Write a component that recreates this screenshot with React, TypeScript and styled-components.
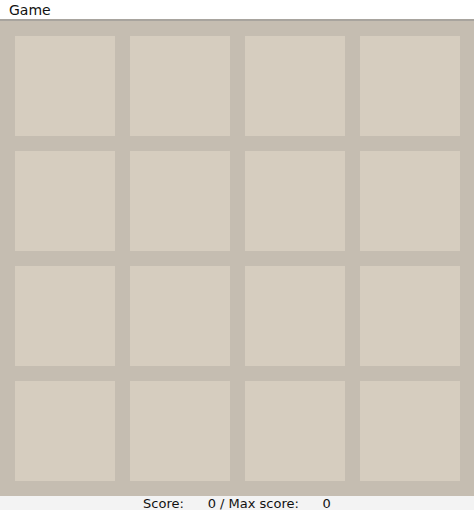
import styled, { createGlobalStyle } from "styled-components";

const GlobalStyle = createGlobalStyle`
  html, body {
    margin: 0;
    padding: 0;
    background: #f2f2f2;
  }
  body {
    font-family: "DejaVu Sans", "Open Sans", sans-serif;
  }
`;

const Window = styled.div`
  width: 474px;
  height: 510px;
  display: flex;
  flex-direction: column;
  overflow: hidden;
`;

const TitleBar = styled.div`
  height: 19px;
  flex: none;
  background: #ffffff;
  border-bottom: 2px solid #a8a49e;
  display: flex;
  align-items: center;
  padding-left: 9px;
  font-size: 14px;
  color: #111;
`;

const Board = styled.div`
  flex: none;
  background: #c5bdb1;
  padding: 15px 14px 15px 15px;
  display: grid;
  grid-template-columns: repeat(4, 100px);
  grid-auto-rows: 100px;
  gap: 15px;
`;

const Tile = styled.div<{ $value: number }>`
  background: ${(p) => (p.$value === 0 ? "#d6cdbf" : "#eee4da")};
`;

const Footer = styled.div`
  flex: 1;
  background: #f3f3f3;
  display: flex;
  justify-content: center;
  align-items: flex-start;
  font-size: 13px;
  line-height: 16px;
  color: #111;
  padding-top: 0px;
`;

const Label = styled.span`
  white-space: pre;
`;

const Value = styled.span<{ $w: number }>`
  display: inline-block;
  width: ${(p) => p.$w}px;
  text-align: right;
`;

const cells = Array.from({ length: 16 }, () => 0);

export default function App() {
  const score = 0;
  const maxScore = 0;
  return (
    <>
      <GlobalStyle />
      <Window>
        <TitleBar>Game</TitleBar>
        <Board>
          {cells.map((v, i) => (
            <Tile key={i} $value={v} />
          ))}
        </Board>
        <Footer>
          <Label>Score:</Label>
          <Value $w={32}>{score}</Value>
          <Label> / Max score:</Label>
          <Value $w={32}>{maxScore}</Value>
        </Footer>
      </Window>
    </>
  );
}
